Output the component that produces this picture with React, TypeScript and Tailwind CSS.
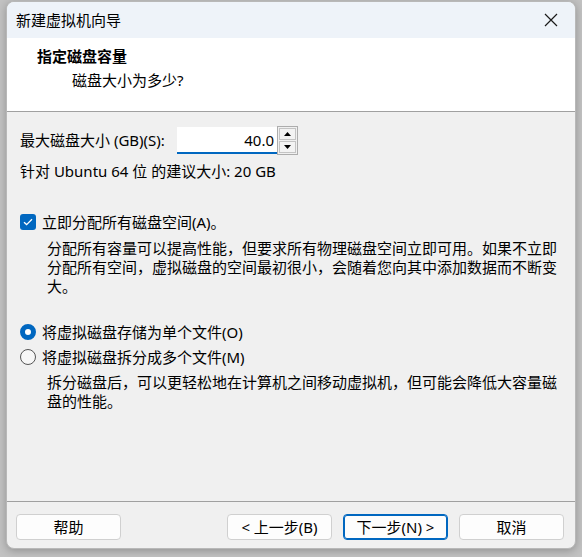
import React, { useState } from 'react';

const font = { fontFamily: '"Noto Sans", "Noto Sans CJK SC", sans-serif' };

const Button = ({ label, primary }: { label: string; primary?: boolean }) => (
  <button
    className={`h-[26px] w-[105px] rounded-[4px] bg-[#fdfdfd] text-[15px] leading-none text-black ${
      primary ? 'border border-[#0067c0] shadow-[inset_0_0_0_1px_#0067c0]' : 'border border-[#d0d0d0]'
    }`}
  >
    {label}
  </button>
);

export default function App() {
  const [allocate, setAllocate] = useState(true);
  const [single, setSingle] = useState(true);

  return (
    <div className="w-[582px] h-[557px] bg-[#c2c2c2] pl-[6px] pt-[1px]" style={font}>
      <div className="w-[570px] h-[548px] rounded-lg bg-[#f0f0f0] shadow-[0_2px_8px_rgba(0,0,0,0.25)] border border-[#b8b8b8] overflow-hidden flex flex-col text-[15px] text-black">
        {/* Title bar */}
        <div className="h-[36px] shrink-0 bg-[#eef3f9] flex items-center justify-between pl-[9px] pr-[16px]">
          <span className="leading-5">新建虚拟机向导</span>
          <svg width="14" height="14" viewBox="0 0 14 14" className="mr-[1px]">
            <path d="M1 1L13 13M13 1L1 13" stroke="#1a1a1a" strokeWidth="1.2" />
          </svg>
        </div>

        {/* Header */}
        <div className="h-[74px] shrink-0 bg-white border-b border-[#a0a0a0] pt-[8px] pl-[30px]">
          <div className="font-bold leading-5">指定磁盘容量</div>
          <div className="leading-5 mt-[4px] pl-[35px]">磁盘大小为多少?</div>
        </div>

        {/* Body */}
        <div className="flex-1 pl-[13px] pr-[18px] pt-[14px]">
          <div className="flex items-center h-[29px]">
            <span className="w-[157px] leading-5 -mt-[2px]">最大磁盘大小 (GB)(S):</span>
            <div className="h-[27px] w-[100px] bg-white border-b-2 border-[#0067c0] flex items-center justify-end pr-[3px]">
              <span className="leading-5">40.0</span>
            </div>
            <div className="h-[29px] w-[21px] border border-[#adadad] bg-[#f0f0f0] flex flex-col p-[1px] gap-[1px]">
              <div className="flex-1 bg-[#f3f3f3] border border-[#c4c4c4] flex items-center justify-center">
                <svg width="7" height="4" viewBox="0 0 7 4"><path d="M0 4L3.5 0L7 4Z" fill="#000" /></svg>
              </div>
              <div className="flex-1 bg-[#f3f3f3] border border-[#c4c4c4] flex items-center justify-center">
                <svg width="7" height="4" viewBox="0 0 7 4"><path d="M0 0L3.5 4L7 0Z" fill="#000" /></svg>
              </div>
            </div>
          </div>

          <div className="mt-[6px] leading-5">针对 Ubuntu 64 位 的建议大小: 20 GB</div>

          <label className="mt-[31px] flex items-center h-5 gap-[6px] cursor-pointer" onClick={() => setAllocate(!allocate)}>
            <span className={`w-[16px] h-[16px] rounded-[3px] flex items-center justify-center ${allocate ? 'bg-[#0067c0]' : 'bg-white border border-[#555]'}`}>
              {allocate && (
                <svg width="10" height="8" viewBox="0 0 10 8">
                  <path d="M1 4.2L3.6 6.6L9 1.2" stroke="#fff" strokeWidth="1.3" fill="none" />
                </svg>
              )}
            </span>
            <span className="leading-5">立即分配所有磁盘空间(A)。</span>
          </label>
          <p className="mt-[7px] pl-[27px] leading-[19px]">
            分配所有容量可以提高性能，但要求所有物理磁盘空间立即可用。如果不立即分配所有空间，虚拟磁盘的空间最初很小，会随着您向其中添加数据而不断变大。
          </p>

          <label className="mt-[26px] flex items-center h-5 gap-[6px] cursor-pointer" onClick={() => setSingle(true)}>
            <span className={`w-[16px] h-[16px] rounded-full ${single ? 'border-[5px] border-[#0067c0] bg-white' : 'border border-[#555] bg-[#f7f7f7]'}`} />
            <span className="leading-5">将虚拟磁盘存储为单个文件(O)</span>
          </label>
          <label className="mt-[5px] flex items-center h-5 gap-[6px] cursor-pointer" onClick={() => setSingle(false)}>
            <span className={`w-[16px] h-[16px] rounded-full ${!single ? 'border-[5px] border-[#0067c0] bg-white' : 'border border-[#555] bg-[#f7f7f7]'}`} />
            <span className="leading-5">将虚拟磁盘拆分成多个文件(M)</span>
          </label>
          <p className="mt-[6px] pl-[27px] leading-[19px]">
            拆分磁盘后，可以更轻松地在计算机之间移动虚拟机，但可能会降低大容量磁盘的性能。
          </p>
        </div>

        {/* Footer */}
        <div className="h-[47px] shrink-0 border-t border-[#a0a0a0] flex items-start pt-[12px] pl-[9px] pr-[11px]">
          <Button label="帮助" />
          <div className="flex-1" />
          <div className="flex gap-[11px]">
            <Button label="< 上一步(B)" />
            <Button label="下一步(N) >" primary />
            <Button label="取消" />
          </div>
        </div>
      </div>
    </div>
  );
}
